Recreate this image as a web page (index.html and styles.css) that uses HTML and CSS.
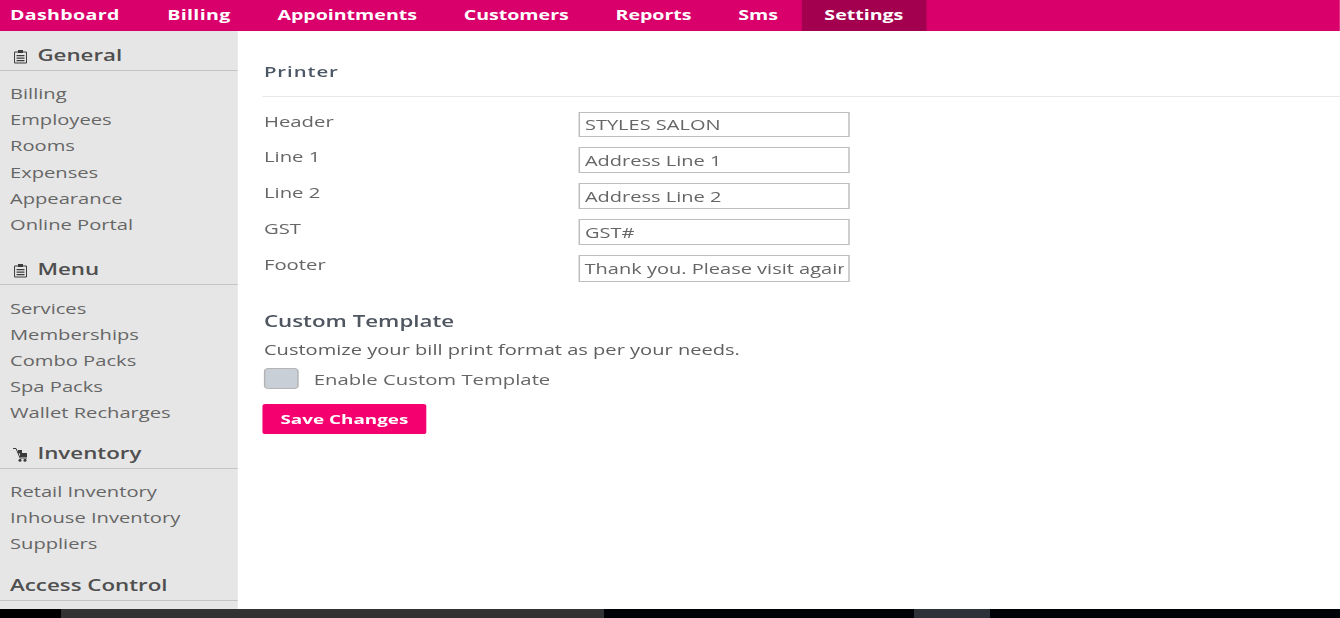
FILE: index.html
```html
<!DOCTYPE html>
<html lang="en">
<head>
<meta charset="utf-8">
<title>Settings - Printer</title>
<link rel="stylesheet" href="styles.css">
</head>
<body>
<div class="stretch">
  <nav class="topnav">
    <a class="nav-link first">Dashboard</a>
    <a class="nav-link spaced">Billing</a>
    <a class="nav-link">Appointments</a>
    <a class="nav-link">Customers</a>
    <a class="nav-link">Reports</a>
    <a class="nav-link">Sms</a>
    <a class="nav-link active">Settings</a>
  </nav>
  <div class="body-row">
    <aside class="sidebar">
      <h3 class="side-head">
        <svg class="side-icon" viewBox="0 0 15 15" preserveAspectRatio="none" aria-hidden="true"><path class="ic-line" d="M1.5 3h12v11h-12z"/><path class="ic-fill" d="M5 1h5v3H5zM3.5 6h8v1.3h-8zM3.5 8.5h8v1.3h-8zM3.5 11h8v1.3h-8z"/></svg>
        General
      </h3>
      <ul class="side-list first-list">
        <li>Billing</li><li>Employees</li><li>Rooms</li><li>Expenses</li><li>Appearance</li><li>Online Portal</li>
      </ul>
      <h3 class="side-head menu-head">
        <svg class="side-icon" viewBox="0 0 15 15" preserveAspectRatio="none" aria-hidden="true"><path class="ic-line" d="M1.5 3h12v11h-12z"/><path class="ic-fill" d="M5 1h5v3H5zM3.5 6h8v1.3h-8zM3.5 8.5h8v1.3h-8zM3.5 11h8v1.3h-8z"/></svg>
        Menu
      </h3>
      <ul class="side-list">
        <li>Services</li><li>Memberships</li><li>Combo Packs</li><li>Spa Packs</li><li>Wallet Recharges</li>
      </ul>
      <h3 class="side-head inv-head">
        <svg class="side-icon" viewBox="0 0 15 15" preserveAspectRatio="none" aria-hidden="true"><path class="ic-line" d="M0 1.5h3l4 9.5h7"/><path class="ic-fill" d="M5 3h4v3.5H5zM7 6h7v4H7z"/><circle class="ic-fill" cx="7" cy="13.3" r="1.5"/><circle class="ic-fill" cx="12" cy="13.3" r="1.5"/></svg>
        Inventory
      </h3>
      <ul class="side-list inv-list">
        <li>Retail Inventory</li><li>Inhouse Inventory</li><li>Suppliers</li>
      </ul>
      <h3 class="side-head access-head">Access Control</h3>
    </aside>
    <main class="content">
      <h4 class="page-title">Printer</h4>
      <form class="fields">
        <label class="field-label top-label">Header</label>
        <input class="field-input top-input" type="text" value="STYLES SALON">
        <label class="field-label">Line 1</label>
        <input class="field-input" type="text" value="Address Line 1">
        <label class="field-label">Line 2</label>
        <input class="field-input" type="text" value="Address Line 2">
        <label class="field-label">GST</label>
        <input class="field-input" type="text" value="GST#">
        <label class="field-label">Footer</label>
        <input class="field-input last-input" type="text" value="Thank you. Please visit again">
      </form>
      <h4 class="sub-title">Custom Template</h4>
      <p class="sub-text">Customize your bill print format as per your needs.</p>
      <div class="toggle-row">
        <span class="toggle"></span>
        <span class="toggle-label">Enable Custom Template</span>
      </div>
      <button class="save-btn" type="button">Save Changes</button>
    </main>
  </div>
</div>
<div class="taskbar">
  <span class="bar-a"></span>
  <span class="bar-b"></span>
  <span class="bar-c"></span>
  <span class="bar-d"></span>
  <span class="bar-e"></span>
</div>
</body>
</html>
```

FILE: styles.css
```css
* { box-sizing: border-box; }
html, body { margin: 0; height: 618px; overflow: hidden; background: #fff; }
body { font-family: "Open Sans", "Liberation Sans", sans-serif; color: #5a5a5a; }

/* The capture is stretched horizontally; horizontal lengths below are in stretched units (px / 1.45). */
.stretch {
  width: 924.14px;
  height: 609px;
  display: flex;
  flex-direction: column;
  transform: scaleX(1.45);
  transform-origin: 0 0;
}

.topnav { display: flex; height: 31px; flex: none; background: #d9006c; }
.nav-link { padding: 0 16.1px; font-size: 13.5px; font-weight: 700; line-height: 30px; color: #fff; }
.nav-link.first { padding-left: 6.9px; letter-spacing: 0.25px; }
.nav-link.spaced { padding-left: 16.6px; letter-spacing: 0.25px; }
.nav-link.active { padding: 0 15.7px 0 15.9px; background: #a3004f; }

.body-row { display: flex; flex: 1; min-height: 0; }
.sidebar { width: 164.14px; flex: none; background: #e6e6e6; padding-top: 9px; overflow: hidden; }

.side-head {
  display: flex;
  align-items: center;
  gap: 6.9px;
  height: 31px;
  margin: 0;
  padding: 2px 0 0 8.6px;
  border-bottom: 1px solid #c4c4c4;
  font-size: 15.4px;
  font-weight: 600;
  line-height: 30px;
  color: #4f4f4f;
}
.side-icon { width: 10.3px; height: 15px; flex: none; }
.ic-line { fill: none; stroke: #3a3a3a; stroke-width: 1; }
.ic-fill { fill: #3a3a3a; }

.menu-head { margin-top: 16px; }
.inv-head { margin-top: 12px; }
.access-head { margin-top: 13px; padding-left: 6.9px; }

.side-list { list-style: none; margin: 11px 0 0; padding: 0 0 0 6.9px; font-size: 13.9px; line-height: 26px; color: #666; }
.first-list { margin-top: 10px; line-height: 26.2px; }
.inv-list { margin-top: 10px; }

.content { flex: 1; min-width: 0; padding-left: 17.9px; }
.page-title {
  margin: 0 0 0 -0.7px;
  padding: 31px 0 14px 0.7px;
  border-bottom: 1px solid #e6e8ec;
  font-size: 14px;
  font-weight: 600;
  letter-spacing: 0.65px;
  line-height: 20px;
  color: #4c5866;
}

.fields { display: grid; grid-template-columns: 217.2px 186.9px; row-gap: 10px; margin-top: 14px; }
.field-label { font-size: 14px; line-height: 18px; margin-top: 1px; color: #666; }
.top-label { margin-top: 2px; }
.field-input {
  width: 100%;
  height: 26px;
  padding: 0 3.2px;
  border: 1px solid #bdbdbd;
  border-radius: 0;
  background: #fff;
  font: 13.8px "Open Sans", "Liberation Sans", sans-serif;
  color: #666;
  outline: none;
}
.top-input { height: 25px; margin-top: 1px; }
.last-input { height: 27px; }

.sub-title { margin: 29px 0 0; font-size: 15.4px; font-weight: 600; line-height: 22px; color: #4f5660; }
.sub-text { margin: 7px 0 0; font-size: 13.85px; line-height: 20px; color: #5f5f5f; }
.toggle-row { display: flex; align-items: center; margin-top: 8px; height: 21px; }
.toggle { width: 23.5px; height: 21px; flex: none; border: 1px solid #b4b4b4; border-radius: 3px; background: #c9cfd6; }
.toggle-label { margin-left: 10.9px; padding-top: 2px; font-size: 14px; color: #666; }
.save-btn {
  display: block;
  width: 112.4px;
  height: 30px;
  margin: 15px 0 0 -0.7px;
  padding: 0;
  border: 0;
  border-radius: 2px;
  background: #f5006f;
  color: #fff;
  font: 700 13px "Open Sans", "Liberation Sans", sans-serif;
}

.taskbar { display: flex; height: 9px; background: #000; }
.bar-a { width: 61px; background: #000; }
.bar-b { width: 543px; background: #333; }
.bar-c { width: 310px; background: #000207; }
.bar-d { width: 76px; background: #2e3238; }
.bar-e { flex: 1; background: #000207; }
```
